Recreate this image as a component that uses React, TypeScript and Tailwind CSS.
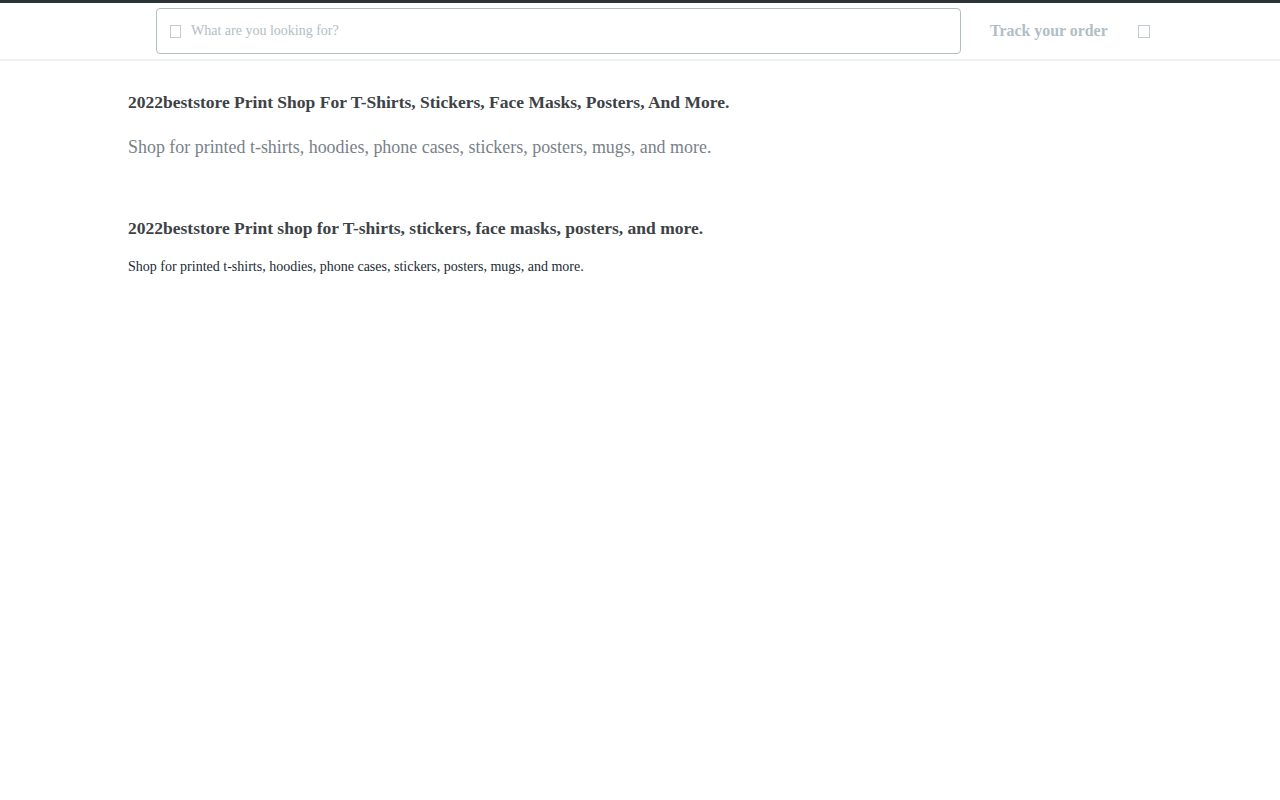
const serif = "font-['Liberation_Serif','Times_New_Roman',serif]"

function MissingIcon({ className }: { className: string }) {
  return <span className={`block shrink-0 border ${className}`} />
}

export default function App() {
  return (
    <div className={`min-h-[800px] bg-white ${serif}`}>
      <header className="h-[61px] border-t-[3px] border-b-2 border-t-[#2b3437] border-b-[#f0f0f0]">
        <div className="flex h-full items-start pl-[156px]">
          <div className="mt-[5px] flex h-[46px] w-[805px] items-center rounded-[4px] border border-[#b1bec4] pl-[13px]">
            <MissingIcon className="h-[13px] w-[11px] border-[#c3ccd0]" />
            <span className="ml-[10px] -mt-[2px] text-[14px] text-[#b1bec4]">What are you looking for?</span>
          </div>
          <span className="ml-[29px] mt-[18px] text-[15.9px] leading-[20px] font-bold text-[#b1bec4]">Track your order</span>
          <MissingIcon className="ml-[30px] mt-[22px] h-[13px] w-[12px] border-[#c3ccd0]" />
        </div>
      </header>
      <main className="px-[128px]">
        <section className="pt-[31px]">
          <h1 className="text-[17.5px] leading-[20px] font-bold text-[#3d4246]">
            2022beststore Print Shop For T-Shirts, Stickers, Face Masks, Posters, And More.
          </h1>
          <p className="mt-[24px] text-[17.93px] leading-[22px] text-[#788188]">
            Shop for printed t-shirts, hoodies, phone cases, stickers, posters, mugs, and more.
          </p>
        </section>
        <section className="pt-[60px]">
          <h2 className="text-[17.5px] leading-[20px] font-bold text-[#3d4246]">
            2022beststore Print shop for T-shirts, stickers, face masks, posters, and more.
          </h2>
          <p className="mt-[20px] text-[14px] leading-[18px] text-[#212b36]">
            Shop for printed t-shirts, hoodies, phone cases, stickers, posters, mugs, and more.
          </p>
        </section>
      </main>
    </div>
  )
}
